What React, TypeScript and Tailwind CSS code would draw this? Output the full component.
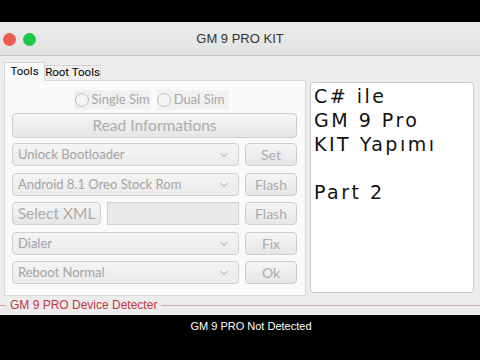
import { ChevronDown } from 'lucide-react'

const ui = { fontFamily: 'Lato, "Open Sans", sans-serif' }
const arial = { fontFamily: '"Liberation Sans", Arial, sans-serif' }

function Combo({ label }: { label: string }) {
  return (
    <div className="flex h-[23px] flex-1 items-center justify-between rounded-[4px] border border-[#cfcfcf] bg-gradient-to-b from-[#f4f4f4] to-[#ebebeb] pl-[5px] pr-[8px] text-[13px] text-[#a3a3a3]" style={ui}>
      <span>{label}</span>
      <ChevronDown size={12} strokeWidth={2} className="text-[#9a9a9a]" />
    </div>
  )
}

function Btn({ label, className = '' }: { label: string; className?: string }) {
  return (
    <div className={`flex h-[23px] items-center justify-center rounded-[4px] border border-[#cdcdcd] bg-gradient-to-b from-[#f5f5f5] to-[#e6e6e6] text-[#ababab] ${className}`} style={ui}>
      {label}
    </div>
  )
}

export default function App() {
  return (
    <div className="flex h-[360px] w-[480px] flex-col bg-black">
      <div className="h-[22px]" />
      <div className="relative flex h-[34px] items-center justify-center border-b border-[#c9c9c9] bg-gradient-to-b from-[#ececec] to-[#e2e2e2]">
        <div className="absolute left-[3px] top-[11px] flex gap-[7px]">
          <div className="h-[13px] w-[13px] rounded-full bg-[#ec5b52]" />
          <div className="h-[13px] w-[13px] rounded-full bg-[#1ec846]" />
        </div>
        <span className="text-[13px] text-[#333]" style={arial}>GM 9 PRO KIT</span>
      </div>
      <div className="flex h-[259px] flex-col bg-[#ececec]">
        <div className="flex flex-1 gap-[4px] pl-[4px] pr-[6px] pt-[6px]">
          <div className="flex w-[302px] flex-col">
            <div className="flex h-[18px] items-end whitespace-nowrap text-[11.5px] text-black" style={{ fontFamily: 'Roboto, sans-serif' }}>
              <div className="relative z-10 -mb-px flex h-[19px] w-[41px] items-center justify-center border border-b-0 border-[#d4d4d4] bg-[#fafafa]">Tools</div>
              <div className="flex h-[15px] w-[56px] items-center justify-center border border-l-0 border-b-0 border-[#d4d4d4] bg-[#f0f0f0]">Root Tools</div>
            </div>
            <div className="flex h-[216px] flex-col border border-[#d9d9d9] bg-[#fafafa] pl-[7px] pr-[8px] pt-[10px]">
              <div className="flex h-[18px] items-center justify-center gap-[6px] pr-[6px] text-[13px] text-[#a6a6a6]" style={ui}>
                <div className="flex items-center gap-[3px] bg-[#f1f1f1] px-[1px]">
                  <span className="h-[14px] w-[14px] rounded-full border border-[#bdbdbd] bg-[#f4f4f4]" />
                  <span>Single Sim</span>
                </div>
                <div className="flex items-center gap-[3px] bg-[#f1f1f1] pr-[5px]">
                  <span className="h-[14px] w-[14px] rounded-full border border-[#bdbdbd] bg-[#f4f4f4]" />
                  <span>Dual Sim</span>
                </div>
              </div>
              <Btn label="Read Informations" className="mt-[4px] h-[25px] text-[15.5px]" />
              <div className="mt-[5px] flex gap-[6px]">
                <Combo label="Unlock Bootloader" />
                <Btn label="Set" className="w-[52px] text-[14px]" />
              </div>
              <div className="mt-[7px] flex gap-[6px]">
                <Combo label="Android 8.1 Oreo Stock Rom" />
                <Btn label="Flash" className="w-[52px] text-[14px]" />
              </div>
              <div className="mt-[6px] flex gap-[6px]">
                <Btn label="Select XML" className="w-[89px] text-[15.5px]" />
                <div className="h-[23px] flex-1 border border-[#cfcfcf] bg-[#e9e9e9]" />
                <Btn label="Flash" className="w-[52px] text-[14px]" />
              </div>
              <div className="mt-[7px] flex gap-[6px]">
                <Combo label="Dialer" />
                <Btn label="Fix" className="w-[52px] text-[14px]" />
              </div>
              <div className="mt-[6px] flex gap-[6px]">
                <Combo label="Reboot Normal" />
                <Btn label="Ok" className="w-[52px] text-[14px]" />
              </div>
            </div>
          </div>
          <div className="mt-[20px] h-[211px] flex-1 whitespace-pre rounded-[4px] border border-[#c8c8c8] bg-white pl-[3px] pt-[1px] text-[19px] leading-[24px] tracking-[2.5px] text-[#111]" style={{ fontFamily: '"DejaVu Sans", sans-serif' }}>
            {'C# ile\nGM 9 Pro\nKIT Yapımı\n\nPart 2'}
          </div>
        </div>
        <div className="mb-[1px] flex items-center gap-[4px]">
          <div className="h-px w-[6px] bg-[#dba5ad]" />
          <span className="text-[12px] text-[#c0393f]" style={arial}>GM 9 PRO Device Detecter</span>
          <div className="h-px flex-1 bg-[#dba5ad]" />
        </div>
      </div>
      <div className="flex flex-1 justify-center pt-[3px] pl-[22px]">
        <span className="text-[11px] text-white" style={arial}>GM 9 PRO Not Detected</span>
      </div>
    </div>
  )
}
